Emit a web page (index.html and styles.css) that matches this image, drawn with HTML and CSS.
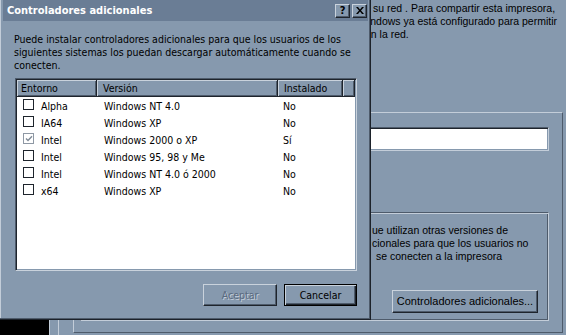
FILE: index.html
```html
<!DOCTYPE html>
<html lang="es">
<head>
<meta charset="utf-8">
<title>Controladores adicionales</title>
<link rel="stylesheet" href="styles.css">
</head>
<body>
<div class="desk">
  <div class="bgwin">
    <div class="bgtext">
      <div class="t1">su red . Para compartir esta impresora,</div>
      <div class="t2">Windows ya está configurado para permitir</div>
      <div class="t3">en la red.</div>
    </div>
    <div class="tabpage">
      <div class="namebox"></div>
      <div class="group">
        <div class="gtext">
          <div>ue utilizan otras versiones de</div>
          <div>cionales para que los usuarios no</div>
          <div class="g3">se conecten a la impresora</div>
        </div>
        <div class="gfoot"><button class="btn wide">Controladores adicionales...</button></div>
      </div>
    </div>
  </div>

  <div class="dialog">
    <div class="titlebar">
      <span class="title">Controladores adicionales</span>
      <div class="tbtns">
        <span class="tb help">?</span>
        <span class="tb close"><svg width="8" height="7" viewBox="0 0 8 7"><path d="M0 0h2l2 2.5L6 0h2L5 3.5 8 7H6L4 4.5 2 7H0l3-3.5z" fill="#000"/></svg></span>
      </div>
    </div>
    <div class="dbody">
      <p class="intro">Puede instalar controladores adicionales para que los usuarios de los<br>siguientes sistemas los puedan descargar automáticamente cuando se<br>conecten.</p>
      <div class="list">
        <div class="lhead">
          <span class="h c1">Entorno</span>
          <span class="h c2">Versión</span>
          <span class="h c3">Instalado</span>
          <span class="h c4"></span>
        </div>
        <div class="row"><span class="c1"><i class="cb"></i>Alpha</span><span class="c2">Windows NT 4.0</span><span class="c3">No</span></div>
        <div class="row"><span class="c1"><i class="cb"></i>IA64</span><span class="c2">Windows XP</span><span class="c3">No</span></div>
        <div class="row"><span class="c1"><i class="cb on"><svg width="8" height="8" viewBox="0 0 8 8"><path d="M1 3.5l2 2L7 1.2" fill="none" stroke="#7f8a96" stroke-width="1.4"/></svg></i>Intel</span><span class="c2">Windows 2000 o XP</span><span class="c3">Sí</span></div>
        <div class="row"><span class="c1"><i class="cb"></i>Intel</span><span class="c2">Windows 95, 98 y Me</span><span class="c3">No</span></div>
        <div class="row"><span class="c1"><i class="cb"></i>Intel</span><span class="c2">Windows NT 4.0 ó 2000</span><span class="c3">No</span></div>
        <div class="row"><span class="c1"><i class="cb"></i>x64</span><span class="c2">Windows XP</span><span class="c3">No</span></div>
      </div>
      <div class="actions">
        <button class="btn disabled">Aceptar</button>
        <button class="btn default">Cancelar</button>
      </div>
    </div>
  </div>
</div>
</body>
</html>
```
FILE: styles.css
```css
* { box-sizing: border-box; margin: 0; padding: 0; }
html, body { width: 566px; height: 335px; overflow: hidden; background: #000; }
body { font-family: "Liberation Sans", Arial, sans-serif; color: #000; }
.desk { position: relative; width: 566px; height: 335px; overflow: hidden; }

/* background window */
.bgwin {
  position: absolute; left: 49px; top: 0;
  width: 530px; height: 345px;
  background: #8699ae;
  box-shadow: inset 1px 0 #c3cdd9, inset 9px 0 #8699ae, inset 10px 0 #c3cdd9;
  font-size: 10.5px; line-height: 13px;
}
.bgtext { padding: 2px 0 0 322px; white-space: nowrap; }
.t1 { padding-left: 2px; }
.t2 { text-indent: -13px; }
.t3 { text-indent: -6px; }

.tabpage {
  margin: 71px 0 0 24px;
  width: 490px; height: 221px;
  border: 1px solid; border-color: #c3cdd9 #4e5b6b #4e5b6b #c3cdd9;
  padding-top: 14px;
}
.namebox {
  margin-left: 60px; margin-right: 13px; height: 24px;
  background: #fff;
  border: 1px solid; border-color: #4e5b6b #c3cdd9 #c3cdd9 #4e5b6b;
  box-shadow: inset 1px 1px #1e242c, inset -1px -1px #8699ae;
}
.group {
  margin: 61px 13px 0 6px; height: 109px;
  border: 1px solid; border-color: #4e5b6b #c3cdd9 #c3cdd9 #4e5b6b;
  box-shadow: inset 1px 1px #c3cdd9, inset -1px -1px #4e5b6b;
  display: flex; flex-direction: column;
  padding: 11px 10px 7px 291px;
  white-space: nowrap;
}
.g3 { padding-left: 4px; }
.gfoot { margin-top: auto; display: flex; justify-content: flex-end; }
.btn {
  font: inherit; color: #000;
  background: #8699ae;
  border: 1px solid; border-color: #c9d2dc #1e242c #1e242c #c9d2dc;
  box-shadow: inset -1px -1px #4e5b6b;
  display: flex; align-items: center; justify-content: center;
}
.btn.wide { width: 146px; height: 23px; margin-left: -5px; font-size: 11px; }

/* dialog */
.dialog {
  position: absolute; left: 0; top: 0;
  width: 371px; height: 320px;
  background: #8699ae;
  border-right: 1px solid #1c222a; border-bottom: 1px solid #1c222a;
  box-shadow: inset -1px -1px #4e5b6b, inset 1px 0 #c3cdd9;
  display: flex; flex-direction: column;
  font-family: "DejaVu Sans Condensed", "DejaVu Sans", sans-serif;
  font-stretch: condensed;
  font-size: 10.5px;
}
.titlebar {
  height: 21px; margin: 0 2px 0 3px;
  background: #6a7d95; color: #fff;
  display: flex; align-items: center; justify-content: space-between;
  padding: 0 1px 0 4px;
}
.title { font-weight: bold; font-size: 11px; }
.tbtns { display: flex; gap: 2px; }
.tb {
  width: 15px; height: 14px;
  background: #8699ae;
  border: 1px solid; border-color: #c9d2dc #1e242c #1e242c #c9d2dc;
  box-shadow: inset -1px -1px #4e5b6b;
  display: flex; align-items: center; justify-content: center;
  color: #000; font-weight: bold; font-size: 11px; line-height: 1;
}
.dbody { padding: 12px 13px 0 14px; display: flex; flex-direction: column; }
.intro { line-height: 13px; white-space: nowrap; }
.list {
  margin: 6px 0 0 1px; height: 193px;
  background: #fff;
  border: 1px solid; border-color: #4e5b6b #c9d2dc #c9d2dc #4e5b6b;
  box-shadow: inset 1px 1px #1e242c, inset -1px -1px #8699ae;
  padding: 1px;
}
.lhead { display: flex; height: 17px; }
.h {
  background: #8699ae;
  border-right: 1px solid #1e242c; border-bottom: 1px solid #1e242c;
  box-shadow: inset 1px 1px #c9d2dc, inset -1px -1px #4e5b6b;
  display: flex; align-items: center; padding-left: 6px;
}
.h.c1 { padding-left: 4px; }
.c1 { width: 80px; }
.c2 { width: 181px; }
.c3 { width: 65px; }
.c4 { flex: 1; }
.row { display: flex; height: 17px; align-items: center; }
.row .c1 { display: flex; align-items: center; padding-left: 6px; }
.row .c2 { padding-left: 7px; }
.row .c3 { padding-left: 5px; }
.cb {
  width: 11px; height: 11px; margin-right: 7px; margin-top: -2px;
  border: 1px solid #1e242c; background: #fff;
  display: flex; align-items: center; justify-content: center;
}
.cb.on { border-color: #8e98a4; }
.actions { display: flex; justify-content: flex-end; gap: 7px; margin-top: 13px; }
.actions .btn { width: 74px; height: 22px; }
.btn.disabled { color: #5a6a7e; text-shadow: 1px 1px #c3cdd9; }
.btn.default {
  border: 1px solid #000;
  box-shadow: inset 1px 1px #c9d2dc, inset -1px -1px #1e242c, inset -2px -2px #4e5b6b;
  width: 73px;
}
```
